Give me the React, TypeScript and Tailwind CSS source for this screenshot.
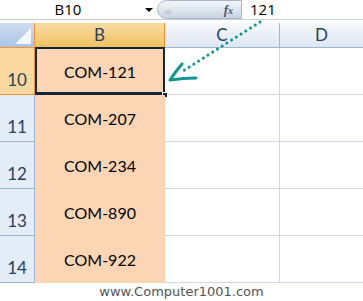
import React from 'react';

const ROWS = [
  { n: 10, v: 'COM-121' },
  { n: 11, v: 'COM-207' },
  { n: 12, v: 'COM-234' },
  { n: 13, v: 'COM-890' },
  { n: 14, v: 'COM-922' },
];

export default function App() {
  return (
    <div className="relative w-[363px] h-[301px] overflow-hidden bg-white" style={{ fontFamily: 'Lato, "Open Sans", sans-serif' }}>
      {/* Formula bar */}
      <div className="flex h-[20px] border-b border-[#c5cdd8] items-stretch">
        <div className="w-[140px] flex items-center justify-center pr-[4px] text-[15px] text-black" style={{ fontFamily: '"Open Sans", sans-serif' }}>
          B10
        </div>
        <div className="w-[17px] flex items-center justify-center">
          <div className="w-0 h-0 border-l-[4px] border-r-[4px] border-t-[4px] border-l-transparent border-r-transparent border-t-black" />
        </div>
        <div className="relative w-[85px] h-[19px] rounded-l-full bg-gradient-to-b from-[#f3f6fa] via-[#dfe6ef] to-[#c8d4e3] border border-[#a8b8cc] flex items-center justify-end pr-[8px]">
          <div className="absolute left-[6px] top-[5px] w-[8px] h-[8px] rounded-full bg-gradient-to-b from-[#f6f7f8] to-[#b9c0c8]" />
          <span className="italic text-[13px] text-[#4a5565] font-semibold" style={{ fontFamily: '"Liberation Serif", serif' }}>
            f<span className="text-[10px]">x</span>
          </span>
        </div>
        <div className="flex-1 flex items-center pl-[8px] text-[15px] text-black" style={{ fontFamily: '"Open Sans", sans-serif' }}>
          121
        </div>
      </div>

      {/* Grid */}
      <div className="mt-[3px] grid grid-cols-[35px_130px_115px_1fr] text-[#27415f]">
        {/* Header row */}
        <div className="h-[25px] bg-gradient-to-b from-[#cfdcef] to-[#a9c4e9] border-r border-b border-[#f29436] relative">
          <svg className="absolute right-[3px] bottom-[3px]" width="16" height="16" viewBox="0 0 16 16">
            <polygon points="16,0 16,16 0,16" fill="#ffffff" opacity="0.85" />
          </svg>
        </div>
        <div className="h-[25px] bg-gradient-to-b from-[#f9dba3] to-[#f1c15f] border-r border-b border-[#f29436] flex items-center justify-center text-[17px]">
          B
        </div>
        <div className="h-[25px] bg-gradient-to-b from-[#f7f9fc] to-[#dde6f2] border-r border-b border-[#9eb6ce] flex items-center justify-center text-[17px]">
          C
        </div>
        <div className="h-[25px] bg-gradient-to-b from-[#f7f9fc] to-[#dde6f2] border-b border-[#9eb6ce] flex items-center justify-center text-[17px]">
          D
        </div>

        {ROWS.map((r, i) => (
          <React.Fragment key={r.n}>
            <div
              className={`h-[47px] border-r border-b flex items-end justify-center pb-[2px] text-[17px] ${
                i === 0 ? 'bg-[#f9d99f] border-[#f29436]' : 'bg-[#e4ecf7] border-[#9eb6ce]'
              }`}
            >
              {r.n}
            </div>
            <div className="relative h-[47px] bg-[#fcd5b4] flex items-center justify-center text-[16px] text-black">
              {i === 0 && (
                <>
                  <div className="absolute inset-0 -top-[1px] border-2 border-[#13263a] border-b-[3px]" />
                  <div className="absolute -right-[3px] -bottom-[3px] w-[6px] h-[6px] bg-[#13263a] border border-white" />
                </>
              )}
              <span className="relative">{r.v}</span>
            </div>
            <div className="h-[47px] border-r border-b border-[#d0d7e5]" />
            <div className="h-[47px] border-b border-[#d0d7e5]" />
          </React.Fragment>
        ))}
      </div>

      <div className="text-center text-[13px] text-[#555555] leading-[17px]" style={{ fontFamily: '"DejaVu Sans", sans-serif' }}>
        www.Computer1001.com
      </div>

      {/* Arrow overlay */}
      <svg className="absolute left-0 top-0 pointer-events-none" width="363" height="301" viewBox="0 0 363 301">
        <line x1="260" y1="22" x2="183" y2="71" stroke="#12968f" strokeWidth="3" strokeLinecap="round" strokeDasharray="0.1 5.5" />
        <path d="M182 64 Q176 71 170 80 Q184 78 196 78" fill="none" stroke="#12968f" strokeWidth="3" strokeLinecap="round" strokeLinejoin="round" />
      </svg>
    </div>
  );
}
